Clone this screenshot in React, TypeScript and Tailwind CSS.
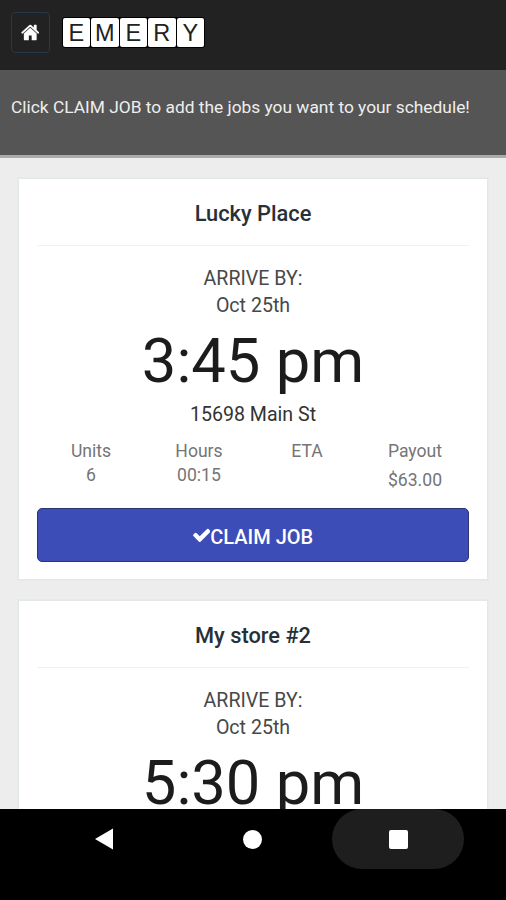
import React from 'react'

interface Job {
  name: string
  date: string
  time: string
  details?: {
    address: string
    units: string
    hours: string
    payout: string
  }
}

const jobs: Job[] = [
  {
    name: 'Lucky Place',
    date: 'Oct 25th',
    time: '3:45 pm',
    details: {
      address: '15698 Main St',
      units: '6',
      hours: '00:15',
      payout: '$63.00',
    },
  },
  {
    name: 'My store #2',
    date: 'Oct 25th',
    time: '5:30 pm',
  },
]

const HomeIcon: React.FC = () => (
  <svg viewBox="64 192 1664 1408" className="h-[17px] w-[18.5px]" fill="currentColor" preserveAspectRatio="none">
    <path d="M1472 992v480q0 26-19 45t-45 19h-384v-384h-256v384h-384q-26 0-45-19t-19-45v-480q0-1 .5-3t.5-3l575-474 575 474q1 2 1 6zm223-69l-62 74q-8 9-21 11h-3q-13 0-21-7l-692-577-692 577q-12 8-24 7-13-2-21-11l-62-74q-8-10-7-23.5t11-21.5l719-599q32-26 76-26t76 26l244 204v-195q0-14 9-23t23-9h192q14 0 23 9t9 23v408l219 182q10 8 11 21.5t-7 23.5z" />
  </svg>
)

const CheckIcon: React.FC = () => (
  <svg viewBox="121 0 1550 1792" className="-mt-1 h-5 w-[17.5px]" fill="currentColor">
    <path d="M1671 566q0 40-28 68l-724 724-136 136q-28 28-68 28t-68-28l-136-136-362-362q-28-28-28-68t28-68l136-136q28-28 68-28t68 28l294 295 656-657q28-28 68-28t68 28l136 136q28 28 28 68z" />
  </svg>
)

const Header: React.FC = () => (
  <header className="flex h-[70px] shrink-0 items-start bg-[#222222] pl-[11px] pt-3">
    <button className="flex h-[41px] w-[39px] items-center justify-center rounded-[4px] border border-[#26384a] pr-px text-white">
      <HomeIcon />
    </button>
    <div className="ml-[11.5px] mt-[5px] flex gap-px rounded-[3px] border border-black bg-black font-['Liberation_Sans',sans-serif] text-[23.5px] leading-[30px] text-[#222222]">
      {['E', 'M', 'E', 'R', 'Y'].map((letter, i) => (
        <span key={i} className="h-[29px] w-[27.5px] rounded-[2px] bg-white text-center">
          {letter}
        </span>
      ))}
    </div>
  </header>
)

const Notice: React.FC = () => (
  <div className="h-[88px] shrink-0 border-b-[3px] border-[#aaaaaa] bg-[#555555] pl-[11px] pt-[25px] text-[17.35px] leading-6 text-[#eeeeee]">
    Click CLAIM JOB to add the jobs you want to your schedule!
  </div>
)

const JobCard: React.FC<{ job: Job }> = ({ job }) => (
  <section className="h-[402px] shrink-0 border border-[#e4e7e8] bg-white px-[18px] text-center shadow-[0_0_1px_1px_#e7e9ea]">
    <h2 className="h-[67px] border-b border-[#f1f1f1] pt-[21px] text-[21.8px] font-medium leading-[27px] text-[#263038]">
      {job.name}
    </h2>
    <div className="pt-[19px] text-[19.6px] leading-[27px] text-[#484848]">
      <p>ARRIVE BY:</p>
      <p>{job.date}</p>
    </div>
    <p className="mt-2 text-[61.5px] leading-[68px] text-[#1c1c1c]">{job.time}</p>
    {job.details && (
      <>
        <p className="mt-[6px] text-[19.6px] leading-[27px] text-[#333333]">{job.details.address}</p>
        <div className="mt-[12px] grid h-[67.5px] grid-cols-4 text-[17.6px] leading-[23.5px] text-[#757575]">
          <div>
            <p>Units</p>
            <p>{job.details.units}</p>
          </div>
          <div>
            <p>Hours</p>
            <p>{job.details.hours}</p>
          </div>
          <div>
            <p>ETA</p>
          </div>
          <div>
            <p>Payout</p>
            <p className="mt-[5px]">{job.details.payout}</p>
          </div>
        </div>
        <button className="flex h-[54px] w-full items-center justify-center rounded-[5px] border border-[#2c3673] bg-[#3d4db7] pt-1 text-[20px] font-medium text-white">
          <CheckIcon />
          CLAIM JOB
        </button>
      </>
    )}
  </section>
)

const NavBar: React.FC = () => (
  <nav className="flex h-[91px] shrink-0 items-start bg-black pl-[38px] text-white">
    <div className="flex h-[60px] w-[132px] items-center justify-center">
      <svg viewBox="0 0 18 22" className="h-[22px] w-[18px]" fill="currentColor">
        <path d="M18 0.5v21L0 11z" />
      </svg>
    </div>
    <div className="ml-4 flex h-[60px] w-[132px] items-center justify-center">
      <span className="size-[19px] rounded-full bg-white" />
    </div>
    <div className="ml-[14px] flex h-[60px] w-[132px] items-center justify-center rounded-full bg-[#1e1e1e] pl-px">
      <span className="size-[19px] rounded-[2px] bg-white" />
    </div>
  </nav>
)

const App: React.FC = () => {
  return (
    <div className="flex h-[900px] w-[506px] flex-col overflow-hidden bg-[#ededed] font-['Roboto',sans-serif]">
      <Header />
      <Notice />
      <main className="flex min-h-0 flex-1 flex-col gap-5 overflow-hidden px-[18px] pt-5">
        {jobs.map((job) => (
          <JobCard key={job.name} job={job} />
        ))}
      </main>
      <NavBar />
    </div>
  )
}

export default App
